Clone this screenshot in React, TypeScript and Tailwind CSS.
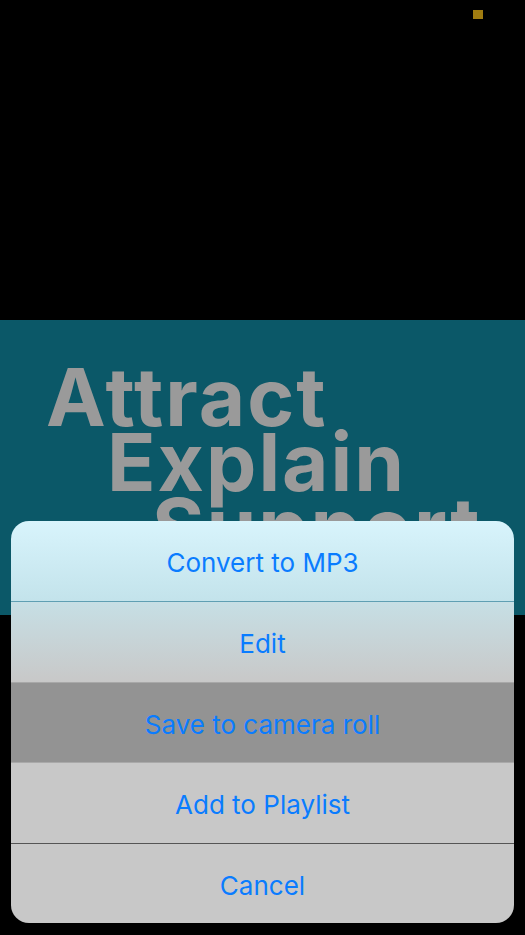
import React from "react";

export default function App() {
  const rows = [
    { label: "Convert to MP3", cls: "h-[81px] bg-gradient-to-b from-[#d8f4fc] to-[#c3e3eb] border-b border-[#5f9fb3]" },
    { label: "Edit", cls: "h-[81px] bg-gradient-to-b from-[#c6dfe5] to-[#c8c8c8] border-b border-[#a8a8a8]" },
    { label: "Save to camera roll", cls: "h-[80px] bg-[#939393] border-b border-[#a9a9a9]" },
    { label: "Add to Playlist", cls: "h-[81px] bg-[#c8c8c8] border-b border-[#555555]" },
    { label: "Cancel", cls: "h-[79px] bg-[#c8c8c8]" },
  ];
  return (
    <div className="relative w-[525px] h-[935px] bg-black overflow-hidden" style={{ fontFamily: "Inter, Roboto, 'Liberation Sans', sans-serif" }}>
      <div className="h-[320px] relative">
        <div className="absolute left-[473px] top-[10px] w-[10px] h-[9px] bg-[#a07c10]" />
      </div>
      <div className="h-[295px] bg-[#0b5868] overflow-hidden pt-[44px]">
        <div className="text-[#9a9a9a] font-bold text-[80px] leading-[65px] tracking-[2px]">
          <div className="pl-[46px]">Attract</div>
          <div className="pl-[107px]">Explain</div>
          <div className="pl-[152px]">Support</div>
        </div>
      </div>
      <div className="absolute left-[11px] top-[521px] w-[503px] rounded-[18px] overflow-hidden flex flex-col">
        {rows.map((r) => (
          <div key={r.label} className={`flex items-center justify-center pt-[3px] text-[26px] text-[#0a7cff] ${r.cls}`}>
            {r.label}
          </div>
        ))}
      </div>
    </div>
  );
}
